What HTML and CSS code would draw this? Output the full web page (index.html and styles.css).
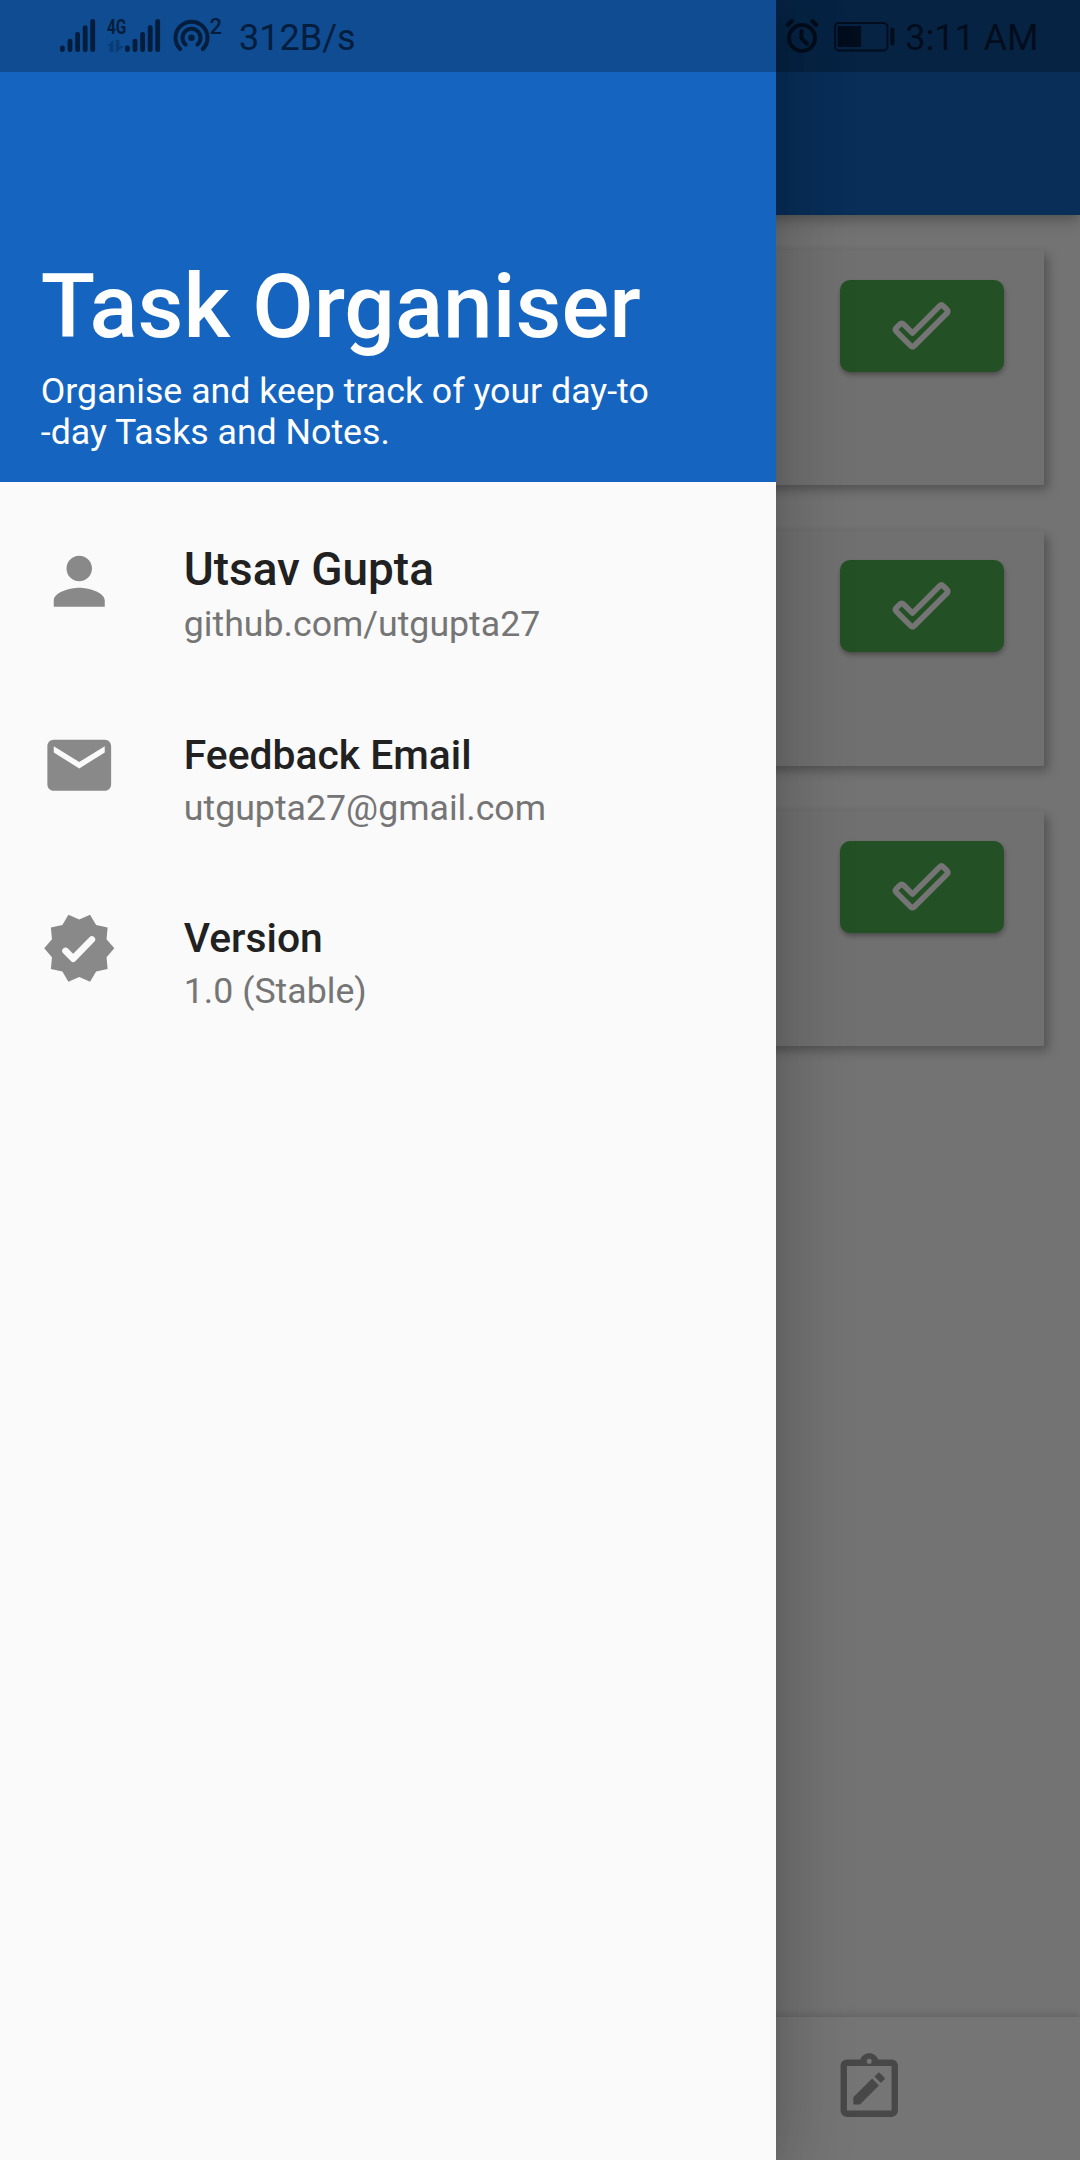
FILE: index.html
```html
<!DOCTYPE html>
<html lang="en">
<head>
<meta charset="utf-8">
<title>Task Organiser</title>
<link rel="stylesheet" href="styles.css">
</head>
<body>
<div class="screen">
  <div class="page">
    <header class="appbar">
      <div class="status status-end">
        <svg class="alarm" width="34" height="40" viewBox="0 0 34 40" fill="none" stroke="currentColor" stroke-width="4" stroke-linecap="round" stroke-linejoin="round"><circle cx="17" cy="24" r="13"/><path d="M16.5 17v7.5l5.5 5.2M2.8 11l4-4M31.2 11l-4-4" /></svg>
        <svg class="battery" width="62" height="30" viewBox="0 0 62 30"><rect x="1" y="1" width="52.5" height="27.5" rx="4" fill="none" stroke="currentColor" stroke-width="1.8"/><rect x="3.6" y="3.9" width="23.5" height="21.2" rx="1" fill="currentColor"/><rect x="56.3" y="5.6" width="4.2" height="18" rx="2" fill="currentColor"/></svg>
        <span class="status-text clock">3:11 AM</span>
      </div>
    </header>
    <main class="tasks">
      <article class="card"><button class="done"><svg width="61.2" height="61.2" viewBox="0 0 24 24"><use href="#check"/></svg></button></article>
      <article class="card"><button class="done"><svg width="61.2" height="61.2" viewBox="0 0 24 24"><use href="#check"/></svg></button></article>
      <article class="card"><button class="done"><svg width="61.2" height="61.2" viewBox="0 0 24 24"><use href="#check"/></svg></button></article>
    </main>
    <nav class="bottom-nav">
      <svg width="76.5" height="76.5" viewBox="0 0 24 24" fill="#9e9e9e"><path fill-rule="evenodd" d="M5 3h4.2C9.55 1.8 10.7 1 12 1s2.45.8 2.8 2H19c1.1 0 2 .9 2 2v14c0 1.1-.9 2-2 2H5c-1.1 0-2-.9-2-2V5c0-1.1.9-2 2-2zm0 2v14h14V5H5zm7-2.25a.8.8 0 1 0 0 1.6.8.8 0 0 0 0-1.6z"/><path d="M7 17.1v-2.3l5.9-5.85 2.15 2.15-5.95 6zM13.65 8.3l1.2-1.15q.2-.15.4 0l1.6 1.6q.15.2 0 .4l-1.2 1.2z"/></svg>
    </nav>
  </div>
  <div class="scrim"></div>

  <aside class="drawer">
    <div class="drawer-header">
      <div class="status status-start">
        <svg class="signal" width="36" height="34" viewBox="0 0 36 34" fill="currentColor"><use href="#bars"/></svg>
        <div class="network">
          <span class="network-type">4G</span>
          <svg width="17" height="12" viewBox="0 0 17 12" fill="#0a3c76"><path d="M0 6 6.5 0v12H2.8V6zM8.8 0h3.4v6H17L9.8 12h-1z"/></svg>
        </div>
        <svg class="signal" width="36" height="34" viewBox="0 0 36 34" fill="currentColor"><use href="#bars"/></svg>
        <svg class="hotspot" width="37" height="34" viewBox="0 0 37 34" fill="none" stroke="currentColor" stroke-width="4" stroke-linecap="round"><path d="M7.2 30A16 16 0 1 1 29.8 30M12.6 25.6a9 9 0 1 1 11.8 0"/><circle cx="18.5" cy="18.7" r="3.2" fill="currentColor" stroke="none"/></svg>
        <span class="hotspot-count">2</span>
        <span class="status-text rate">312B/s</span>
      </div>
      <h1 class="title">Task Organiser</h1>
      <p class="tagline">Organise and keep track of your day-to<br>-day Tasks and Notes.</p>
    </div>
    <ul class="info">
      <li class="row row-author">
        <svg class="row-icon" viewBox="0 0 24 24"><path d="M12 12c2.21 0 4-1.79 4-4s-1.79-4-4-4-4 1.79-4 4 1.79 4 4 4zm0 2c-2.67 0-8 1.34-8 4v2h16v-2c0-2.66-5.33-4-8-4z"/></svg>
        <div><div class="label author">Utsav Gupta</div><div class="detail github">github.com/utgupta27</div></div>
      </li>
      <li class="row">
        <svg class="row-icon" viewBox="0 0 24 24"><path d="M20 4H4c-1.1 0-2 .9-2 2v12c0 1.1.9 2 2 2h16c1.1 0 2-.9 2-2V6c0-1.1-.9-2-2-2zm0 4l-8 5-8-5V6l8 5 8-5v2z"/></svg>
        <div><div class="label">Feedback Email</div><div class="detail">utgupta27@gmail.com</div></div>
      </li>
      <li class="row">
        <svg class="row-icon" viewBox="0 0 24 24"><path d="M23 12l-2.44-2.79.34-3.69-3.61-.82-1.89-3.2L12 2.96 8.6 1.5 6.71 4.69 3.1 5.5l.34 3.7L1 12l2.44 2.79-.34 3.7 3.61.82L8.6 22.5l3.4-1.47 3.4 1.46 1.89-3.19 3.61-.82-.34-3.69z"/><path d="M7.7 12.85l2.4 2.4 5.85-6" fill="none" stroke="#fafafa" stroke-width="2.1" stroke-linecap="round" stroke-linejoin="round"/></svg>
        <div><div class="label">Version</div><div class="detail">1.0 (Stable)</div></div>
      </li>
    </ul>
  </aside>
</div>

<svg class="defs" width="0" height="0">
  <defs>
    <g id="bars"><rect x="0" y="26.5" width="4.8" height="6.5" rx="2.2"/><rect x="7.6" y="19.7" width="4.8" height="13.3" rx="2.2"/><rect x="15.2" y="13" width="4.8" height="20" rx="2.2"/><rect x="22.8" y="6.3" width="4.8" height="26.7" rx="2.2"/><rect x="30.3" y="0" width="4.8" height="33" rx="2.2"/></g>
    <path id="check" fill="none" stroke="#fff" stroke-width="2.2" stroke-linejoin="round" d="M19.06 4.3Q19.77 3.6 20.48 4.3L21.9 5.72Q22.6 6.43 21.9 7.14L9.14 19.9Q8.43 20.6 7.72 19.9L2.1 14.28Q1.4 13.57 2.1 12.86L3.52 11.45Q4.23 10.74 4.94 11.45L8.43 14.95z"/>
  </defs>
</svg>
</body>
</html>
```
FILE: styles.css
```css
* { box-sizing: border-box; margin: 0; padding: 0; }

body {
  background: #fafafa;
  font-family: Roboto, "Noto Sans", sans-serif;
}

.defs { position: absolute; }

.screen {
  position: relative;
  width: 1080px;
  height: 2160px;
  overflow: hidden;
}

.page {
  display: flex;
  flex-direction: column;
  height: 100%;
  background: #fafafa;
  isolation: isolate;
}

.appbar {
  height: 215px;
  background: #1565c0;
  box-shadow: 0 5px 10px -2px rgba(0, 0, 0, .2), 0 10px 13px rgba(0, 0, 0, .1);
  z-index: 1;
}

.status {
  display: flex;
  align-items: flex-start;
  height: 72px;
  background: rgba(0, 0, 0, .24);
  color: #031d3d;
}

.status-text { font-size: 36px; line-height: 42px; margin-top: 17px; white-space: nowrap; }
.status-end { justify-content: flex-end; padding-right: 41.5px; }
.alarm { margin: 14px 15px 0 0; }
.battery { margin: 22px 9px 0 0; }

.tasks {
  flex: 1;
  display: flex;
  flex-direction: column;
  gap: 45.5px;
  padding: 35px 36px 0;
}

.card {
  display: flex;
  justify-content: flex-end;
  align-items: flex-start;
  height: 235px;
  padding: 29.5px 40px 0;
  background: #f5f5f5;
  box-shadow: 5px 6px 10px rgba(0, 0, 0, .2), 2px 2px 8px rgba(0, 0, 0, .1);
}

.done {
  display: flex;
  align-items: center;
  justify-content: center;
  width: 164px;
  height: 92px;
  border: 0;
  border-radius: 10px;
  background: #4caf50;
  box-shadow: 0 3px 4px -1px rgba(0, 0, 0, .2), 1px 3px 6px rgba(0, 0, 0, .2);
}

.bottom-nav {
  display: flex;
  align-items: flex-start;
  height: 143px;
  padding: 33px 0 0 830.7px;
  background: #fff;
  box-shadow: 0 -2px 8px rgba(0, 0, 0, .14);
}

.scrim { position: absolute; inset: 0; background: rgba(0, 0, 0, .54); }

.drawer {
  position: absolute;
  inset: 0 auto 0 0;
  width: 775.5px;
  background: #fafafa;
  box-shadow: 0 20px 25px -13px rgba(0, 0, 0, .15), 0 0 61px 5px rgba(0, 0, 0, .13), 0 15px 76px 10px rgba(0, 0, 0, .1);
}

.drawer-header {
  height: 482.4px;
  background: #1565c0;
  color: #fff;
}

.status-start { padding-left: 60px; }
.signal { margin-top: 19px; }
.network { display: flex; flex-direction: column; width: 29px; padding-left: 11px; margin-top: 15px; }
.network-type {
  font-size: 21px;
  line-height: 25px;
  font-weight: 700;
  transform: scaleX(.73);
  transform-origin: 0 0;
}
.hotspot { margin: 19px 0 0 11.5px; }
.hotspot-count { font-size: 22px; line-height: 26px; margin: 14px 0 0 0; font-weight: 500; }
.rate { margin-left: 17px; }

.title {
  margin-top: 181.5px;
  padding-left: 40.8px;
  font-size: 89.25px;
  line-height: 105px;
  font-weight: 500;
  white-space: nowrap;
}

.tagline {
  margin-top: 12px;
  padding-left: 40.8px;
  font-size: 35.7px;
  line-height: 41px;
  white-space: nowrap;
}

.info { list-style: none; padding-top: 40.6px; }

.row {
  display: flex;
  gap: 66.5px;
  height: 183.2px;
  padding: 20px 0 0 40.8px;
}

.row-author { height: 184.2px; }
.row-icon { width: 76.5px; height: 76.5px; fill: #898989; }
.label { font-size: 40.8px; line-height: 48px; font-weight: 500; color: #212121; margin-top: 3.4px; }
.author { font-size: 45.9px; line-height: 54px; margin-top: -1.4px; }
.detail { font-size: 35.7px; line-height: 42px; margin-top: 8px; color: #757575; }
.github { margin-top: 7px; }
```
